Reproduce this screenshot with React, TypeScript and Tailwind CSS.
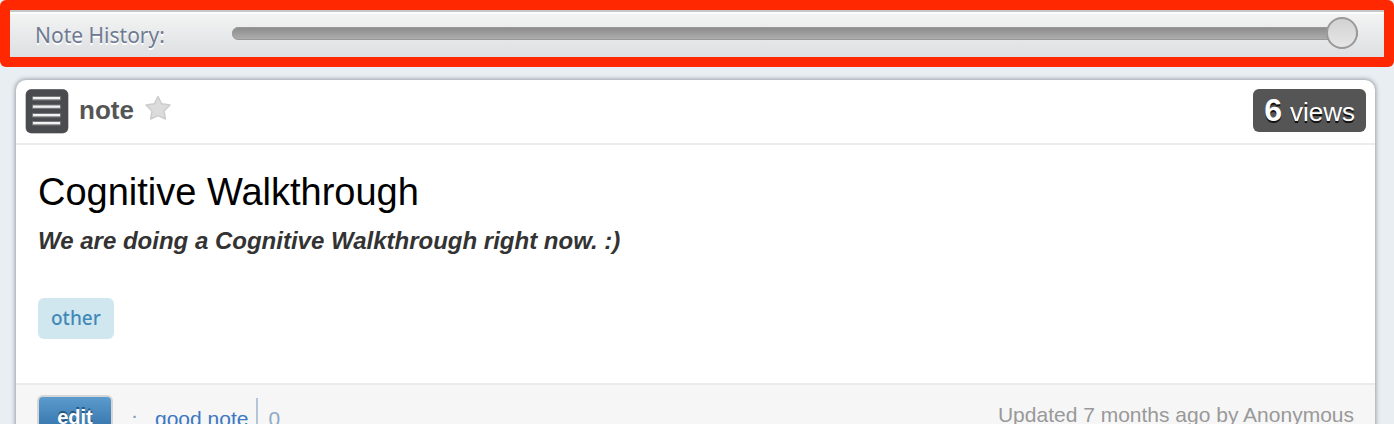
import React, { useState } from "react";

function HistoryBar() {
  const [revision, setRevision] = useState(100);
  return (
    <div className="rounded-md bg-[#ff2800] p-[10px]">
      <div className="flex h-[47px] items-center border-t-2 border-[#c5c7c9] bg-linear-to-b from-[#f4f4f4] to-[#dddfe1] pl-[25px] pr-[26px] shadow-[inset_0_2px_0_#ffffff]">
        <label
          htmlFor="history"
          className="w-[197px] shrink-0 font-['Noto_Sans',sans-serif] text-[21px] leading-7 text-[#6f7b92] [text-shadow:0_2px_0_#ffffff]"
        >
          Note History:
        </label>
        <input
          id="history"
          type="range"
          min={0}
          max={100}
          value={revision}
          onChange={(e) => setRevision(Number(e.target.value))}
          className="mb-[2px] h-8 min-w-0 flex-1 cursor-pointer appearance-none bg-transparent [&::-webkit-slider-runnable-track]:h-[13px] [&::-webkit-slider-runnable-track]:rounded-full [&::-webkit-slider-runnable-track]:bg-linear-to-b [&::-webkit-slider-runnable-track]:from-[#8a8a8a] [&::-webkit-slider-runnable-track]:to-[#b0b0b0] [&::-webkit-slider-runnable-track]:shadow-[inset_0_0_0_1px_#999999] [&::-webkit-slider-thumb]:-mt-[10px] [&::-webkit-slider-thumb]:size-8 [&::-webkit-slider-thumb]:appearance-none [&::-webkit-slider-thumb]:rounded-full [&::-webkit-slider-thumb]:border-2 [&::-webkit-slider-thumb]:border-[#999999] [&::-webkit-slider-thumb]:bg-linear-to-b [&::-webkit-slider-thumb]:from-[#d2d2d2] [&::-webkit-slider-thumb]:to-[#e6e6e6]"
        />
      </div>
    </div>
  );
}

function NoteIcon() {
  return (
    <svg width="44" height="46" viewBox="0 0 44 46" aria-hidden="true">
      <rect x="0.5" y="1" width="43" height="44.5" rx="6" fill="#8b8c8f" />
      <rect x="1" y="1.5" width="42" height="43.5" rx="5" fill="#4a4b4e" />
      {[9, 17.5, 26, 34].map((y) => (
        <g key={y}>
          <rect x="7" y={y - 1} width="29" height="4.5" rx="1" fill="#77787a" />
          <rect x="8" y={y} width="27" height="2.3" fill="#f2f2f2" />
        </g>
      ))}
    </svg>
  );
}

function StarIcon() {
  return (
    <svg width="28" height="27" viewBox="0 0 28 27" aria-hidden="true">
      <path
        d="M14 1.5 L17.6 8.8 L26 10 L20 16 L21.4 24 L14 20.6 L6.6 24 L8 16 L2 10 L10.4 8.8 Z"
        fill="#dcdcdc"
        stroke="#cdcdcd"
        strokeWidth="1.5"
        strokeLinejoin="round"
      />
    </svg>
  );
}

export default function App() {
  return (
    <div className="h-screen overflow-hidden bg-[#e9eef3] font-['Liberation_Sans',Arial,sans-serif]">
      <HistoryBar />
      <main className="ml-4 mt-[13px] mr-[19px] rounded-t-[10px] bg-white shadow-[0_0_4px_1px_#9a9ea6]">
        <header className="flex h-[65px] items-start justify-between border-b-2 border-[#ececec] pl-[9px] pr-[9px] pt-2">
          <div className="flex items-start">
            <NoteIcon />
            <h1 className="ml-[10px] mt-[6px] text-[26px] leading-8 font-bold text-[#555555]">note</h1>
            <button type="button" aria-label="Add to favorites" className="ml-[10px] mt-[7px] cursor-pointer">
              <StarIcon />
            </button>
          </div>
          <div className="mt-px flex h-[43px] items-baseline gap-2 rounded-md bg-[#555555] px-[11px] text-[26px] leading-[43px] text-white [text-shadow:0_2px_0_#111111]">
            <strong className="text-[32px]">6</strong>
            <span>views</span>
          </div>
        </header>
        <section className="h-[238px] px-[22px] pt-6">
          <h2 className="text-[38px] leading-[46px] text-black">Cognitive Walkthrough</h2>
          <p className="mt-3 text-[24px] leading-7 font-bold text-[#333333] italic">
            We are doing a Cognitive Walkthrough right now. :)
          </p>
          <a
            href="#other"
            className="mt-[43px] inline-block rounded-md bg-[#d1e7f0] px-[13px] font-['Noto_Sans',sans-serif] text-[19px] leading-[41px] font-medium text-[#4189b7]"
          >
            other
          </a>
        </section>
        <footer className="flex items-start justify-between border-t-2 border-[#ebebeb] bg-[#f6f6f6] px-[21px] pt-[10px] pb-4 text-[21px]">
          <div className="flex items-start">
            <button
              type="button"
              className="h-12 w-[76px] cursor-pointer rounded-md border-2 border-[#d6d6d6] bg-linear-to-b from-[#5b9bcd] to-[#2767a0] pb-1 text-[20px] font-bold text-white [text-shadow:0_-2px_0_#28577f]"
            >
              edit
            </button>
            <span className="ml-[18px] mt-[6px] leading-7 text-[#7d98b8]">·</span>
            <a href="#good" className="ml-[17px] mt-[10px] leading-7 text-[#3b78c3]">
              good note
            </a>
            <span className="ml-2 mt-[3px] border-l-2 border-[#b7c5d8] pt-[7px] pl-[10px] leading-7 text-[#8fa8c6]">0</span>
          </div>
          <p className="mt-[6px] leading-7 text-[#999999]">Updated 7 months ago by Anonymous</p>
        </footer>
      </main>
    </div>
  );
}
